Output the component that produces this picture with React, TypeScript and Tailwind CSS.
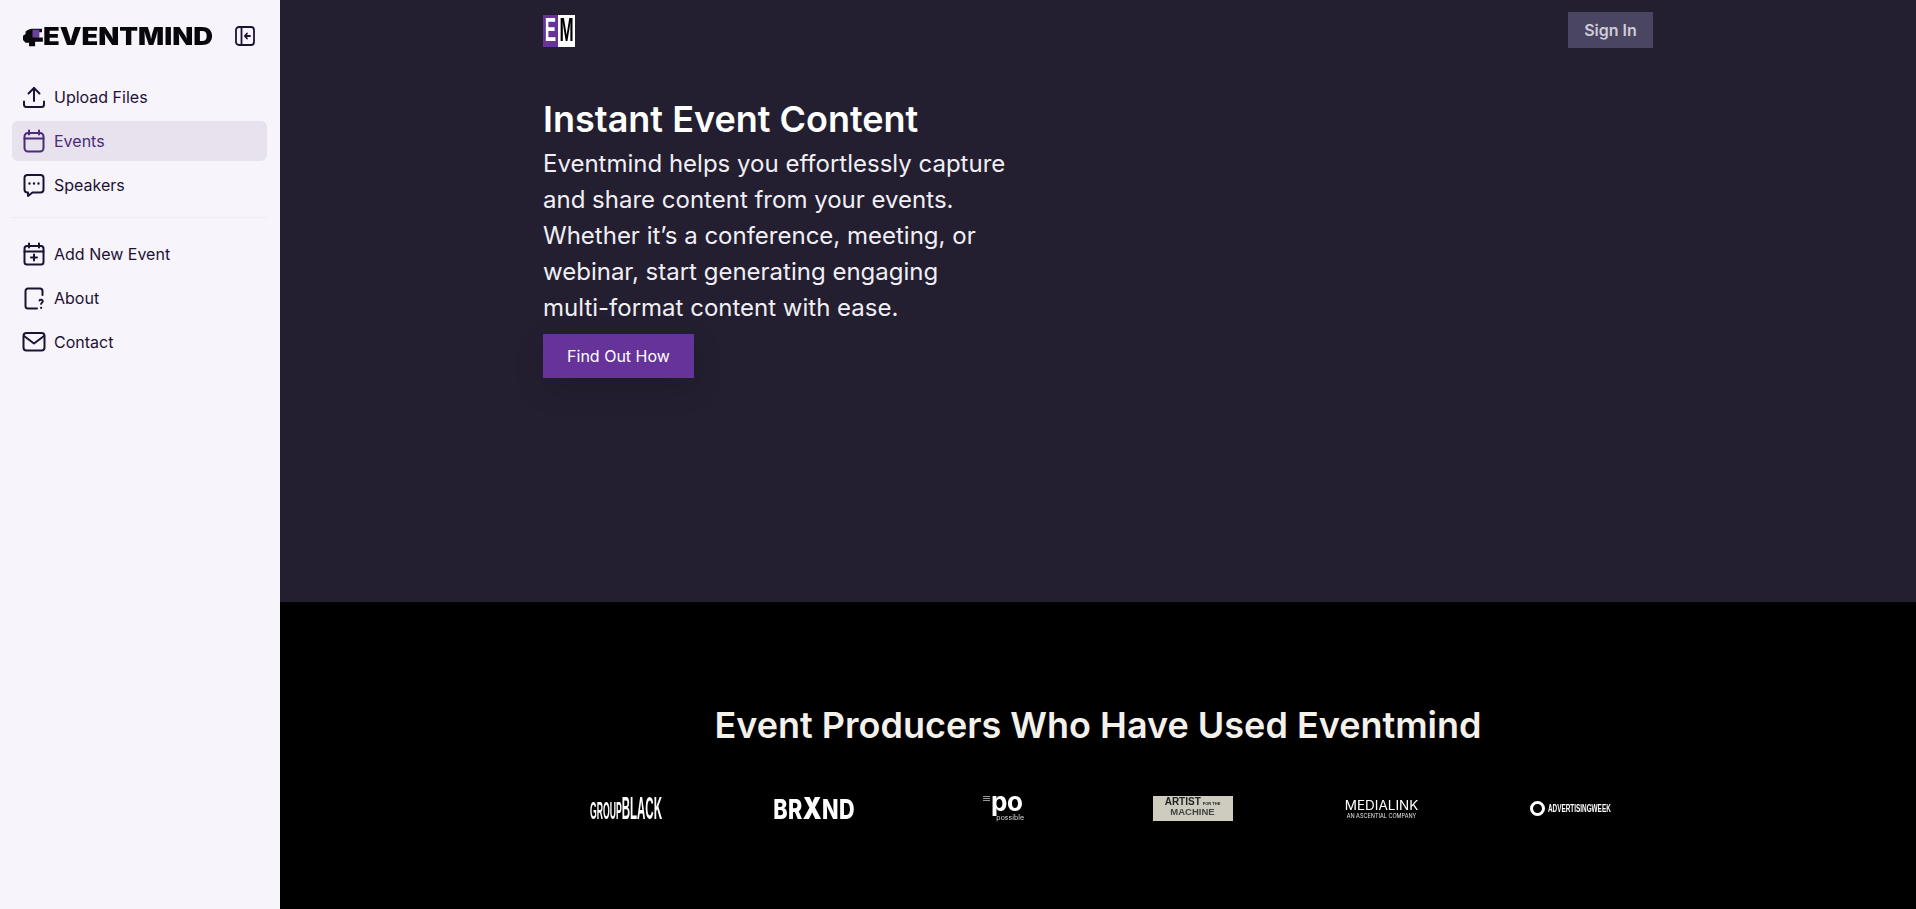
import React from "react";

const inter = { fontFamily: '"Inter", "Liberation Sans", sans-serif' };

function Ic({ children, className = "" }: { children: React.ReactNode; className?: string }) {
  return (
    <svg viewBox="0 0 24 24" width="24" height="24" fill="none" stroke="currentColor" strokeWidth="2" strokeLinecap="round" strokeLinejoin="round" className={"shrink-0 " + className}>
      {children}
    </svg>
  );
}

const UploadIc = () => (
  <Ic>
    <path d="M2 16.500v3A2.500 2.500 0 0 0 4.500 22h15a2.500 2.500 0 0 0 2.500-2.500v-3" />
    <path d="M12 16V3" />
    <path d="M6.500 8.500 12 3l5.500 5.500" />
  </Ic>
);
const CalIc = () => (
  <Ic>
    <path d="M7 1.500v4M17 1.500v4" />
    <rect x="2.500" y="4" width="19" height="18.500" rx="3.500" />
    <path d="M2.500 9.500h19" />
  </Ic>
);
const ChatIc = () => (
  <Ic>
    <path d="M5.500 2h13a3 3 0 0 1 3 3v11.500a3 3 0 0 1-3 3h-8L6 23v-3.500h-.5a3 3 0 0 1-3-3V5a3 3 0 0 1 3-3z" />
    <path d="M7.500 10.500h.01M12 10.500h.01M16.500 10.500h.01" strokeWidth="2.400" />
  </Ic>
);
const AddIc = () => (
  <Ic>
    <path d="M7 1.500v4M17 1.500v4" />
    <rect x="2.500" y="4" width="19" height="18.500" rx="2.500" />
    <path d="M2.500 9.500h19" />
    <path d="M12 12.500v6M9 15.500h6" />
  </Ic>
);
const AboutIc = () => (
  <Ic>
    <path d="M20.500 9V5a2.500 2.500 0 0 0-2.500-2.500H6A2.500 2.500 0 0 0 3.500 5v15A2.500 2.500 0 0 0 6 22.500h9" />
    <path d="M17.500 14.500c.4-1 3.300-1.100 3.300.8 0 1.300-1.700 1.400-1.700 2.600" strokeWidth="1.900" />
    <path d="M19.100 21.800h.01" strokeWidth="2.300" />
  </Ic>
);
const MailIc = () => (
  <Ic>
    <rect x="1.500" y="3" width="21" height="17.500" rx="3" />
    <path d="M2 6l10 7.500L22 6" />
  </Ic>
);
const CollapseIc = () => (
  <svg viewBox="0 0 20 20" width="20" height="20" fill="none" stroke="currentColor" strokeWidth="1.800" strokeLinecap="round" strokeLinejoin="round">
    <rect x="1" y="1" width="18" height="18" rx="3" />
    <path d="M6.500 1v18" />
    <path d="M15 10H10M12 7.500 9.800 10l2.200 2.500" />
  </svg>
);

function NavItem({ icon, label, active }: { icon: React.ReactNode; label: string; active?: boolean }) {
  return (
    <a className={"flex h-10 items-center gap-2 rounded-md px-[10px] text-base font-normal " + (active ? "bg-[#e7e2ee] text-[#4b2a78]" : "text-[#1d1233]")}>
      {icon}
      <span>{label}</span>
    </a>
  );
}

function Brand() {
  return (
    <div className="flex items-center">
      <svg viewBox="0 0 24 22" width="21" height="19" className="shrink-0">
        <path d="M11 1h12v4h-4v6h5v5H15v5H8v-4H4l-3-3V9l3-2V4l3-2z" fill="#0a0a0d" />
        <rect x="12" y="2" width="8" height="9" fill="#6a3fa0" />
      </svg>
      <span className="inline-block origin-left scale-x-[1.14] text-[24px] leading-none font-black text-[#08070c]">EVENTMIND</span>
    </div>
  );
}

function Sidebar() {
  return (
    <aside className="flex w-[280px] shrink-0 flex-col bg-[#f7f4fb] pr-[13px] pl-3">
      <div className="flex h-[77px] items-start justify-between pt-[26px] pl-[10px] pr-[12px]">
        <div className="mt-[-1px]"><Brand /></div>
        <div className="text-[#1d1233]"><CollapseIc /></div>
      </div>
      <nav className="flex flex-col gap-1">
        <NavItem icon={<UploadIc />} label="Upload Files" />
        <NavItem icon={<CalIc />} label="Events" active />
        <NavItem icon={<ChatIc />} label="Speakers" />
      </nav>
      <div className="mt-3 mb-4 border-t border-[#eeebf1]" />
      <nav className="flex flex-col gap-1">
        <NavItem icon={<AddIc />} label="Add New Event" />
        <NavItem icon={<AboutIc />} label="About" />
        <NavItem icon={<MailIc />} label="Contact" />
      </nav>
    </aside>
  );
}

function EmLogo() {
  return (
    <div className="flex h-8 w-8 text-[17px] leading-8 font-bold" style={{ fontFamily: '"Liberation Sans", sans-serif' }}>
      <span className="flex w-[15px] items-center justify-center bg-[#66339b] text-white"><span className="inline-block scale-y-[2]">E</span></span>
      <span className="flex w-[17px] items-center justify-center bg-white text-black"><span className="inline-block scale-y-[2]">M</span></span>
    </div>
  );
}

function LogoRow() {
  const cell = "flex h-12 items-center justify-center";
  const sans = { fontFamily: '"Liberation Sans", sans-serif' };
  return (
    <div className="mt-[34px] grid grid-cols-6 gap-6 blur-[0.4px]">
      <div className={cell} style={sans}>
        <span className="inline-block scale-x-[0.36] leading-none font-bold whitespace-nowrap text-white">
          <span className="text-[24px]">GROUP</span><span className="text-[32px]">BLACK</span>
        </span>
      </div>
      <div className={cell}>
        <span className="inline-block scale-x-[0.8] text-[27px] leading-none font-extrabold tracking-[0.5px] whitespace-nowrap text-white">BR<span className="text-[30px] font-black">X</span>ND</span>
      </div>
      <div className={cell}>
        <div className="mb-[1px] flex items-start gap-[1px] text-white">
          <div className="mt-[1px] flex w-[7px] flex-col gap-[1px]">
            <span className="h-[1px] bg-[#999]" />
            <span className="h-[1px] bg-[#999]" />
            <span className="h-[1px] bg-[#999]" />
          </div>
          <div className="flex w-[33px] flex-col items-start">
            <span className="text-[26px] leading-[14px] font-bold tracking-[-0.5px]">po</span>
            <span className="mt-[5px] self-end text-[7px] leading-[7px] text-[#d8d8d8]">possible</span>
          </div>
        </div>
      </div>
      <div className={cell}>
        <div className="flex h-[25px] w-20 flex-col items-center justify-center bg-[#cdccbf] pb-[3px] text-[#222]" style={sans}>
          <span className="text-[10px] leading-[7px] font-bold whitespace-nowrap">ARTIST<span className="ml-[2px] text-[4px]">FOR THE</span></span>
          <span className="mt-[1px] text-[9.500px] leading-[7px] font-bold text-[#444]">MACHINE</span>
        </div>
      </div>
      <div className={cell}>
        <div className="mt-[2px] flex flex-col items-center text-white">
          <span className="text-[13.500px] leading-[14px] font-normal">MEDIALINK</span>
          <span className="text-[5.500px] leading-[8px] text-[#e5e5e5]">AN ASCENTIAL COMPANY</span>
        </div>
      </div>
      <div className={cell}>
        <div className="flex items-center gap-[3px] text-white">
          <span className="h-[15px] w-[15px] rounded-full border-[3px] border-white" />
          <span className="inline-block w-[63px] text-[11px] font-bold whitespace-nowrap" style={sans}>
            <span className="inline-block origin-left scale-x-[0.58]">ADVERTISINGWEEK</span>
          </span>
        </div>
      </div>
    </div>
  );
}

export default function App() {
  return (
    <div className="flex h-[909px] w-full overflow-hidden" style={inter}>
      <Sidebar />
      <main className="flex min-w-0 flex-1 flex-col">
        <section className="h-[602px] bg-[#231f30]">
          <div className="mx-auto w-[1110px]">
            <header className="flex items-start justify-between pt-[12px]">
              <div className="pt-[3px]"><EmLogo /></div>
              <button className="h-9 w-[85px] bg-[#4a4560] text-base font-semibold text-[#cfccd9]">Sign In</button>
            </header>
            <h1 className="mt-[45px] text-[36px] leading-[53px] font-semibold text-white">Instant Event Content</h1>
            <p className="w-[465px] text-2xl leading-9 font-normal text-[#f1eff5]">
              Eventmind helps you effortlessly capture and share content from your events. Whether it’s a conference, meeting, or webinar, start generating engaging multi-format content with ease.
            </p>
            <button className="mt-[8px] h-11 w-[151px] bg-[#66339b] text-base font-normal text-white shadow-[0_10px_30px_rgba(0,0,0,0.15)]">Find Out How</button>
          </div>
        </section>
        <section className="flex-1 bg-black">
          <div className="mx-auto w-[1110px] pt-[98px]">
            <h2 className="text-center text-[36px] leading-[50px] font-semibold text-[#f4f1ea]">Event Producers Who Have Used Eventmind</h2>
            <LogoRow />
          </div>
        </section>
      </main>
    </div>
  );
}
